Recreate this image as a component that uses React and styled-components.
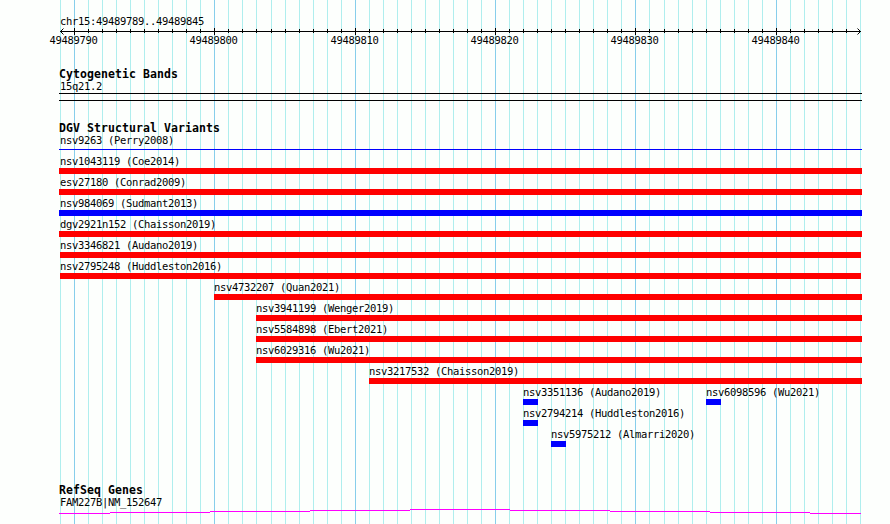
import React from "react";
import styled, { createGlobalStyle } from "styled-components";

const START = 49489789;
const BASES = 57;
const LEFT = 60;
const SCALE = 800 / BASES;

const baseToX = i => Math.round(LEFT + i * SCALE);
const ticks = Array.from({ length: BASES + 1 }, (_, i) => ({
  x: baseToX(i),
  base: START + i,
  major: (START + i) % 10 === 0
}));

const GlobalStyle = createGlobalStyle`
  body {
    margin: 0;
    background: #fdfffd;
    overflow: hidden;
  }
`;

const Browser = styled.main`
  position: relative;
  width: 890px;
  height: 524px;
  overflow: hidden;
  color: #000;
  font: 10.5px/12px "DejaVu Sans Mono", monospace;
  letter-spacing: -0.322px;
  white-space: pre;
`;

const Grid = styled.svg`
  position: absolute;
  top: 0;
  left: 0;
`;

const Tracks = styled.div`
  position: relative;
  display: flex;
  flex-direction: column;
  width: 803px;
  padding: 15px 0 0 59px;
`;

const Region = styled.div`
  height: 12px;
  padding-left: 1px;
`;

const Axis = styled.svg`
  display: block;
  width: 803px;
  height: 26px;
  margin-bottom: 15px;
  overflow: visible;
`;

const Section = styled.section`
  display: flex;
  flex-direction: column;
  height: ${({ height }) => height}px;
`;

const Title = styled.h2`
  height: 12px;
  margin: 0;
  font-size: 11.5px;
  font-weight: bold;
  line-height: 13px;
  letter-spacing: 0.077px;
`;

const Label = styled.div`
  height: 12px;
  padding-left: ${({ inset }) => (inset === undefined ? 1 : inset)}px;
`;

const Band = styled.div`
  box-sizing: border-box;
  height: 8px;
  margin-top: 1px;
  border: solid #000;
  border-width: 1px 0;
`;

const Row = styled.div`
  display: flex;
  flex-shrink: 0;
  height: 21px;
`;

const Variant = styled.div`
  flex: none;
  width: ${({ width }) => width}px;
  margin-left: ${({ gap }) => gap || 0}px;
`;

const Bar = styled.div`
  width: 100%;
  height: ${({ thin }) => (thin ? 1 : 6)}px;
  margin-top: ${({ thin }) => (thin ? 3 : 1)}px;
  background: ${({ gain }) => (gain ? "#00f" : "#f00")};
`;

const Gene = styled.svg`
  display: block;
  width: 803px;
  height: 8px;
  margin-top: 1px;
`;

const rows = [
  [{ name: "nsv9263 (Perry2008)", width: 803, gain: true, thin: true }],
  [{ name: "nsv1043119 (Coe2014)", width: 803 }],
  [{ name: "esv27180 (Conrad2009)", width: 803 }],
  [{ name: "nsv984069 (Sudmant2013)", width: 803, gain: true }],
  [{ name: "dgv2921n152 (Chaisson2019)", width: 803 }],
  [{ name: "nsv3346821 (Audano2019)", gap: 1, width: 801 }],
  [{ name: "nsv2795248 (Huddleston2016)", gap: 1, width: 801 }],
  [{ name: "nsv4732207 (Quan2021)", gap: 155, width: 648 }],
  [{ name: "nsv3941199 (Wenger2019)", gap: 197, width: 606 }],
  [{ name: "nsv5584898 (Ebert2021)", gap: 197, width: 606 }],
  [{ name: "nsv6029316 (Wu2021)", gap: 197, width: 606 }],
  [{ name: "nsv3217532 (Chaisson2019)", gap: 310, width: 493 }],
  [
    { name: "nsv3351136 (Audano2019)", gap: 464, width: 15, gain: true },
    { name: "nsv6098596 (Wu2021)", gap: 168, width: 15, gain: true }
  ],
  [{ name: "nsv2794214 (Huddleston2016)", gap: 464, width: 15, gain: true }],
  [{ name: "nsv5975212 (Almarri2020)", gap: 492, width: 15, gain: true }]
];

const App = () => (
  <>
    <GlobalStyle />
    <Browser>
      <Grid width="890" height="524" shapeRendering="crispEdges">
        {ticks.map(({ x, major }) => (
          <rect
            key={x}
            x={x}
            width="1"
            height="524"
            fill={major ? "#87ceeb" : "#afeeee"}
          />
        ))}
      </Grid>
      <Tracks>
        <Region>chr15:49489789..49489845</Region>
        <Axis viewBox="59 27 803 26">
          <g shapeRendering="crispEdges">
            <rect x="60" y="31" width="801" height="1" />
            {ticks.slice(1, -1).map(({ x, major }) => (
              <rect
                key={x}
                x={x}
                y={major ? 28 : 29}
                width="1"
                height={major ? 7 : 4}
              />
            ))}
          </g>
          <path
            d="M63.5 28.5L60.5 31.5L63.5 34.5M857.5 28.5L860.5 31.5L857.5 34.5"
            fill="none"
            stroke="#000"
          />
          {ticks
            .filter(({ major }) => major)
            .map(({ x, base }) => (
              <text key={base} x={x - 24.5} y="44">
                {base}
              </text>
            ))}
        </Axis>
        <Section height={54}>
          <Title>Cytogenetic Bands</Title>
          <Label>15q21.2</Label>
          <Band />
        </Section>
        <Section height={362}>
          <Title>DGV Structural Variants</Title>
          {rows.map((row, i) => (
            <Row key={i}>
              {row.map(({ name, width, gap, gain, thin }) => (
                <Variant key={name} width={width} gap={gap}>
                  <Label inset={gap > 1 ? 0 : 1 - (gap || 0)}>{name}</Label>
                  <Bar gain={gain} thin={thin} />
                </Variant>
              ))}
            </Row>
          ))}
        </Section>
        <Section height={40}>
          <Title>RefSeq Genes</Title>
          <Label>FAM227B|NM_152647</Label>
          <Gene viewBox="59 509 803 8" shapeRendering="crispEdges">
            <path
              d="M59 513.5H110M110 512.5H210M210 511.5H310M310 510.5H410M410 509.5H510M510 510.5H610M610 511.5H710M710 512.5H810M810 513.5H861"
              stroke="#f0f"
            />
          </Gene>
        </Section>
      </Tracks>
    </Browser>
  </>
);

export default App;
